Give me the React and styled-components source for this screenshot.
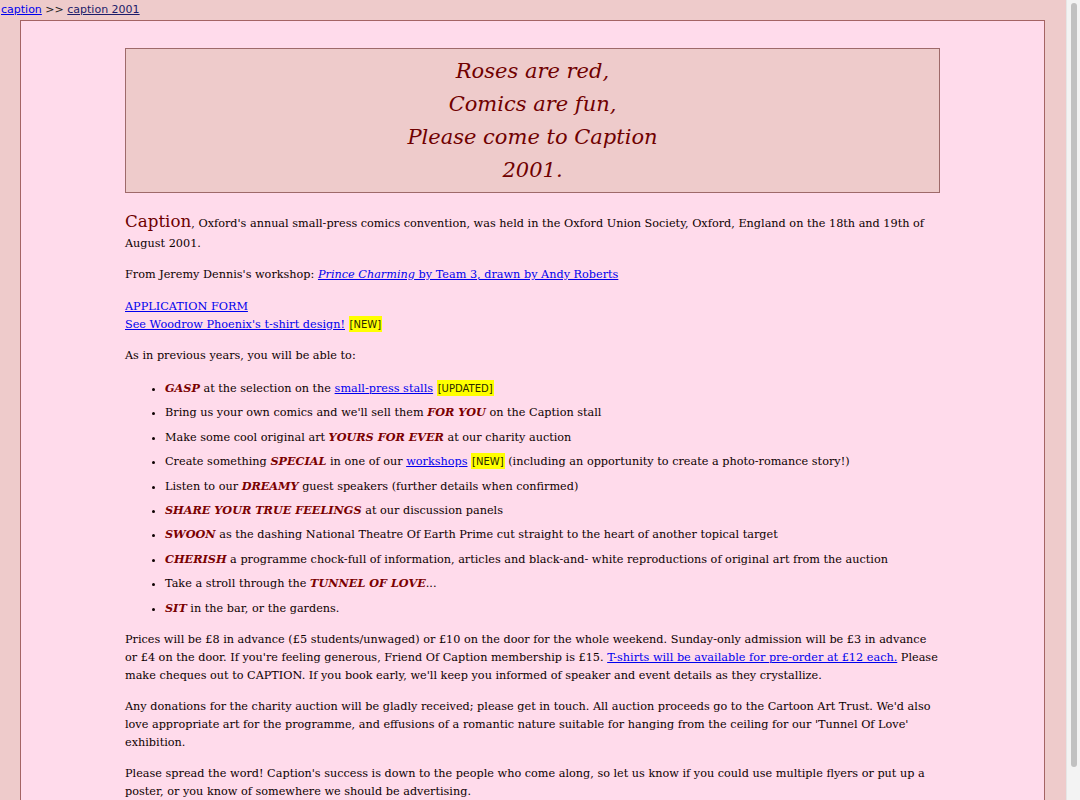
import React from 'react';
import styled, { createGlobalStyle } from 'styled-components';

// -------------------------------------------------------------------------------------

const GlobalStyle = createGlobalStyle`
  html, body {
    margin: 0;
    padding: 0;
    height: 100%;
    overflow: hidden;
  }
  body {
    font-family: "DejaVu Serif", Georgia, serif;
  }
`;

const Screen = styled.div`
  display: flex;
  height: 100vh;
  overflow: hidden;
`;

const Page = styled.div`
  flex: 1;
  background: #eecbcb;
  overflow: hidden;
`;

const Scrollbar = styled.div`
  width: 14px;
  background: #f3f3f3;
  border-left: 1px solid #e6e6e6;
  padding: 3px 3px 0 4px;
  box-sizing: border-box;
`;

const Thumb = styled.div`
  height: 764px;
  background: #c1c1c1;
  border-radius: 4px;
`;

const Crumbs = styled.div`
  font-family: "DejaVu Sans", Verdana, sans-serif;
  font-size: 11px;
  line-height: 18px;
  padding: 1px 0 0 1px;
  color: #222;
`;

const CrumbLink = styled.a`
  color: ${p => (p.current ? '#1c1c6a' : '#0000ee')};
  text-decoration: underline;
`;

const Box = styled.div`
  margin: 1px 21px 0 20px;
  background: #ffdbeb;
  border: 1px solid #a46464;
  padding: 27px 104px 20px 104px;
  color: #0d0000;
  font-size: 11.25px;
  line-height: 18px;
`;

const Banner = styled.div`
  background: #eecbcb;
  border: 1px solid #9e6a6a;
  padding: 6px 0 5px;
  text-align: center;
  font-style: italic;
  font-size: 21px;
  line-height: 33px;
  color: #700000;
`;

const Para = styled.p`
  margin: ${p => p.$top || 13}px 0 ${p => p.$bottom || 13}px;
`;

const Intro = styled(Para)`
  line-height: 20px;
`;

const BigWord = styled.span`
  font-size: 16.7px;
  line-height: 1;
  color: #6e0000;
`;

const Link = styled.a`
  color: #0000ee;
  text-decoration: underline;
`;

const Hot = styled.strong`
  font-style: italic;
  font-weight: bold;
  line-height: 1;
  color: #7a0000;
`;

const Badge = styled.span`
  background: #ffff00;
  font-family: "DejaVu Sans", Verdana, sans-serif;
  font-size: 10px;
  line-height: 1;
  padding: 3px 1px 2px;
  color: #2a2a00;
  text-transform: uppercase;
`;

const List = styled.ul`
  margin: 0;
  padding-left: 40px;
`;

const Item = styled.li`
  line-height: 24.4px;
`;

// -------------------------------------------------------------------------------------

const Tag = ({ children }) => <Badge>[{children}]</Badge>;

const items = [
  <><Hot>GASP</Hot> at the selection on the <Link href="#">small-press stalls</Link> <Tag>updated</Tag></>,
  <>Bring us your own comics and we'll sell them <Hot>FOR YOU</Hot> on the Caption stall</>,
  <>Make some cool original art <Hot>YOURS FOR EVER</Hot> at our charity auction</>,
  <>Create something <Hot>SPECIAL</Hot> in one of our <Link href="#">workshops</Link> <Tag>new</Tag> (including an opportunity to create a photo-romance story!)</>,
  <>Listen to our <Hot>DREAMY</Hot> guest speakers (further details when confirmed)</>,
  <><Hot>SHARE YOUR TRUE FEELINGS</Hot> at our discussion panels</>,
  <><Hot>SWOON</Hot> as the dashing National Theatre Of Earth Prime cut straight to the heart of another topical target</>,
  <><Hot>CHERISH</Hot> a programme chock-full of information, articles and black-and- white reproductions of original art from the auction</>,
  <>Take a stroll through the <Hot>TUNNEL OF LOVE</Hot>...</>,
  <><Hot>SIT</Hot> in the bar, or the gardens.</>,
];

const App = () => {
  return (
    <Screen>
      <GlobalStyle />
      <Page>
        <Crumbs>
          <CrumbLink href="#">caption</CrumbLink> &gt;&gt; <CrumbLink href="#" current>caption 2001</CrumbLink>
        </Crumbs>

        <Box>
          <Banner>
            Roses are red,<br />
            Comics are fun,<br />
            Please come to Caption<br />
            2001.
          </Banner>

          <Intro $top={20} $bottom={12}>
            <BigWord>Caption</BigWord>, Oxford's annual small-press comics convention, was held in the Oxford Union Society, Oxford, England on the 18th and 19th of August 2001.
          </Intro>

          <Para $top={12}>
            From Jeremy Dennis's workshop: <Link href="#"><i>Prince Charming</i> by Team 3, drawn by Andy Roberts</Link>
          </Para>

          <Para $top={14}>
            <Link href="#">APPLICATION FORM</Link><br />
            <Link href="#">See Woodrow Phoenix's t-shirt design!</Link> <Tag>new</Tag>
          </Para>

          <Para $bottom={12}>As in previous years, you will be able to:</Para>

          <List>
            {items.map((item, index) => (
              <Item key={index}>{item}</Item>
            ))}
          </List>

          <Para $top={10}>
            Prices will be £8 in advance (£5 students/unwaged) or £10 on the door for the whole weekend. Sunday-only admission will be £3 in advance or £4 on the door. If you're feeling generous, Friend Of Caption membership is £15. <Link href="#">T-shirts will be available for pre-order at £12 each.</Link> Please make cheques out to CAPTION. If you book early, we'll keep you informed of speaker and event details as they crystallize.
          </Para>

          <Para>
            Any donations for the charity auction will be gladly received; please get in touch. All auction proceeds go to the Cartoon Art Trust. We'd also love appropriate art for the programme, and effusions of a romantic nature suitable for hanging from the ceiling for our 'Tunnel Of Love' exhibition.
          </Para>

          <Para>
            Please spread the word! Caption's success is down to the people who come along, so let us know if you could use multiple flyers or put up a poster, or you know of somewhere we should be advertising.
          </Para>
        </Box>
      </Page>
      <Scrollbar>
        <Thumb />
      </Scrollbar>
    </Screen>
  );
};

export default App;
